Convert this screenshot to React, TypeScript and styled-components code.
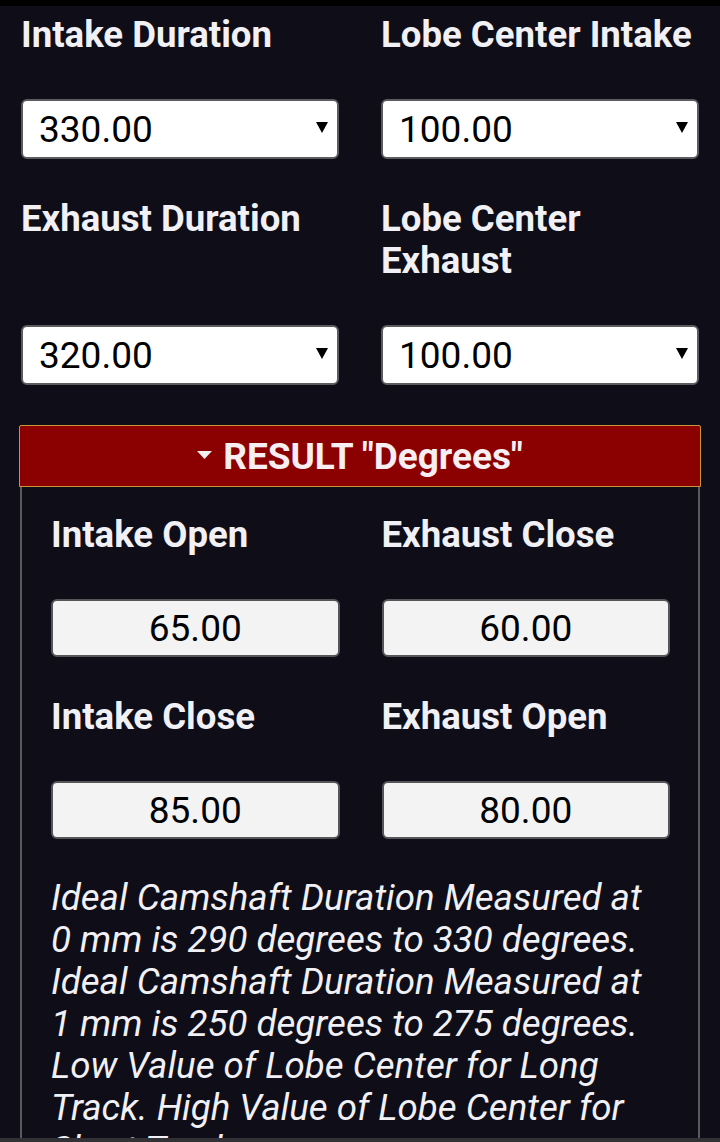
import { useState } from "react";
import styled, { createGlobalStyle } from "styled-components";

const GlobalStyle = createGlobalStyle`
  html, body {
    margin: 0;
    padding: 0;
    background: #0e0d18;
  }
  body {
    font-family: Roboto, "Liberation Sans", Arial, sans-serif;
    color: #f1f0f5;
  }
`;

const TopEdge = styled.div`
  height: 6px;
  background: #000;
`;

const Page = styled.div`
  padding: 8px 20px 40px;
`;

const FieldGrid = styled.div<{ $inset?: boolean }>`
  display: grid;
  grid-template-columns: 1fr 1fr;
  column-gap: 42px;
  row-gap: 39px;
  margin: ${(p) => (p.$inset ? "0" : "0 1px")};
`;

// label on top, control pinned to the bottom so a row's controls line up
const Field = styled.div`
  display: flex;
  flex-direction: column;
`;

const Label = styled.label`
  font-size: 36.6px;
  line-height: 42px;
  font-weight: 700;
  color: #f1f0f5;
  margin-bottom: 43px;
`;

const SelectWrap = styled.div`
  position: relative;
  margin-top: auto;
`;

const Select = styled.select`
  appearance: none;
  -webkit-appearance: none;
  width: 100%;
  height: 60px;
  box-sizing: border-box;
  margin: 0;
  padding: 0 40px 0 16px;
  background: #fff;
  border: 2px solid #5c5c60;
  border-radius: 6px;
  font-family: Roboto, "Liberation Sans", Arial, sans-serif;
  font-size: 37px;
  color: #000;
  outline: none;
`;

const Caret = styled.svg`
  position: absolute;
  right: 11px;
  top: 23px;
  width: 12px;
  height: 11px;
  pointer-events: none;
`;

const Result = styled.details`
  margin-top: 40px;
`;

const Summary = styled.summary`
  list-style: none;
  display: flex;
  align-items: center;
  justify-content: center;
  gap: 11px;
  height: 62px;
  box-sizing: border-box;
  margin: 0 -1px;
  background: #8b0000;
  border: 1px solid #c8943a;
  border-radius: 2px 2px 0 0;
  font-size: 37px;
  font-weight: 700;
  color: #f6eef0;
  cursor: pointer;

  &::-webkit-details-marker {
    display: none;
  }
`;

const Marker = styled.svg`
  width: 15px;
  height: 8px;
  margin-top: -2px;
`;

const PanelBody = styled.div`
  border-left: 2px solid #5a5a5e;
  border-right: 2px solid #5a5a5e;
  padding: 27px 28px 40px 29px;
`;

const ValueBox = styled.input`
  width: 100%;
  height: 58px;
  box-sizing: border-box;
  margin: auto 0 0;
  background: #f3f3f3;
  border: 2px solid #56565a;
  border-radius: 6px;
  text-align: center;
  font-family: Roboto, "Liberation Sans", Arial, sans-serif;
  font-size: 37px;
  color: #000;
  outline: none;
`;

const Notes = styled.p`
  margin: 38px 0 0;
  font-size: 36.7px;
  line-height: 42px;
  font-style: italic;
  color: #f1f0f5;
`;

const BottomBar = styled.div`
  position: fixed;
  left: 0;
  right: 0;
  bottom: 0;
  height: 4px;
  background: #323236;
`;

const durations = ["270.00", "280.00", "290.00", "300.00", "310.00", "320.00", "330.00"];
const centers = ["100.00", "102.00", "104.00", "106.00", "108.00", "110.00", "112.00"];

type DropdownProps = {
  label: string;
  value: string;
  options: string[];
  onChange: (v: string) => void;
};

const Dropdown = ({ label, value, options, onChange }: DropdownProps) => (
  <Field>
    <Label>{label}</Label>
    <SelectWrap>
      <Select value={value} onChange={(e) => onChange(e.target.value)}>
        {options.map((o) => (
          <option key={o} value={o}>
            {o}
          </option>
        ))}
      </Select>
      <Caret viewBox="0 0 12 11">
        <path d="M0 0 H12 L6 11 Z" fill="#000" />
      </Caret>
    </SelectWrap>
  </Field>
);

const Output = ({ label, value }: { label: string; value: string }) => (
  <Field>
    <Label>{label}</Label>
    <ValueBox readOnly value={value} />
  </Field>
);

export default function App() {
  const [intakeDur, setIntakeDur] = useState("330.00");
  const [exhaustDur, setExhaustDur] = useState("320.00");
  const [lcIntake, setLcIntake] = useState("100.00");
  const [lcExhaust, setLcExhaust] = useState("100.00");

  const iDur = parseFloat(intakeDur);
  const eDur = parseFloat(exhaustDur);
  const iLc = parseFloat(lcIntake);
  const eLc = parseFloat(lcExhaust);

  // classic lobe-center math
  const intakeOpen = iDur / 2 - iLc;
  const intakeClose = iDur / 2 + iLc - 180;
  const exhaustOpen = eDur / 2 + eLc - 180;
  const exhaustClose = eDur / 2 - eLc;

  return (
    <>
      <GlobalStyle />
      <TopEdge />
      <Page>
        <FieldGrid>
          <Dropdown label="Intake Duration" value={intakeDur} options={durations} onChange={setIntakeDur} />
          <Dropdown label="Lobe Center Intake" value={lcIntake} options={centers} onChange={setLcIntake} />
          <Dropdown label="Exhaust Duration" value={exhaustDur} options={durations} onChange={setExhaustDur} />
          <Dropdown label="Lobe Center Exhaust" value={lcExhaust} options={centers} onChange={setLcExhaust} />
        </FieldGrid>

        <Result open>
          <Summary>
            <Marker viewBox="0 0 15 8">
              <path d="M0 0 H15 L7.5 8 Z" fill="#f3eef0" />
            </Marker>
            RESULT "Degrees"
          </Summary>
          <PanelBody>
            <FieldGrid $inset>
              <Output label="Intake Open" value={intakeOpen.toFixed(2)} />
              <Output label="Exhaust Close" value={exhaustClose.toFixed(2)} />
              <Output label="Intake Close" value={intakeClose.toFixed(2)} />
              <Output label="Exhaust Open" value={exhaustOpen.toFixed(2)} />
            </FieldGrid>
            <Notes>
              Ideal Camshaft Duration Measured at 0 mm is 290 degrees to 330 degrees. Ideal Camshaft
              Duration Measured at 1 mm is 250 degrees to 275 degrees. Low Value of Lobe Center for
              Long Track. High Value of Lobe Center for Short Track.
            </Notes>
          </PanelBody>
        </Result>
      </Page>
      <BottomBar />
    </>
  );
}
